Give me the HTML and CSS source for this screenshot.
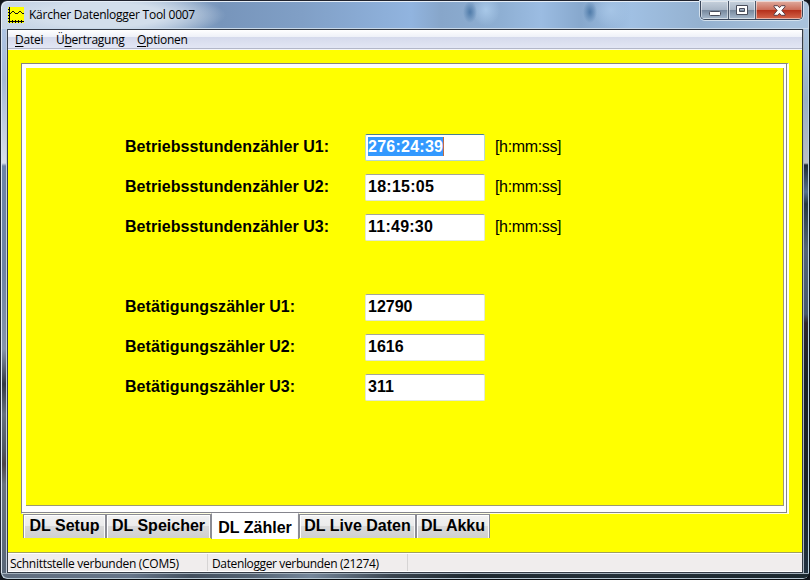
FILE: index.html
```html
<!DOCTYPE html>
<html lang="de">
<head>
<meta charset="utf-8">
<title>Kärcher Datenlogger Tool 0007</title>
<link rel="stylesheet" href="styles.css">
</head>
<body>
<div class="window">
  <header class="titlebar">
    <svg class="app-icon" width="16" height="16" viewBox="0 0 16 16" shape-rendering="crispEdges">
      <rect width="16" height="16" fill="#ff0"/>
      <path d="M1.5 0v16M0 14.5h16M0 2.5h2M0 5.5h2M0 8.5h2M0 11.5h2M4.5 13v3M7.5 13v3M10.5 13v3M13.5 13v3" fill="none" stroke="#000"/>
      <path d="M2 6h1v1H2zM3 5h1v1H3zM4 4h2v1H4zM6 5h1v1H6zM7 6h3v1H7zM10 5h1v1h-1zM11 4h2v1h-2zM13 5h1v1h-1zM14 6h2v1h-2z" fill="#111"/>
    </svg>
    <h1 class="title">Kärcher Datenlogger Tool 0007</h1>
    <div class="controls">
      <span class="control minimize"><svg width="12" height="5" viewBox="0 0 12 5"><rect x=".5" y=".5" width="11" height="4" rx="1" fill="#fff" stroke="#484d5b"/></svg></span>
      <span class="control maximize"><svg width="12" height="10" viewBox="0 0 12 10"><path d="M.5.5h11v9H.5zM3.5 3.5v3h5v-3z" fill="#fff" fill-rule="evenodd" stroke="#484d5b"/></svg></span>
      <span class="control close"><svg width="13" height="11" viewBox="0 0 13 11"><path d="M1 .7h3.7l1.8 2 1.8-2H12v1.1L8.8 5.5 12 9.2v1.1H8.3l-1.8-2-1.8 2H1V9.2l3.2-3.7L1 1.8z" fill="#fff" stroke="#5b3f48"/></svg></span>
    </div>
  </header>
  <div class="side side-left"></div>
  <main class="client">
    <nav class="menu">
      <span class="menu-file"><u>D</u>atei</span>
      <span class="menu-transfer">Ü<u>b</u>ertragung</span>
      <span class="menu-options"><u>O</u>ptionen</span>
    </nav>
    <div class="workspace">
      <section class="panel">
        <div class="page">
          <div class="group">
            <div class="row"><span class="label">Betriebsstundenzähler U1:</span><span class="field focused"><span class="selection">276:24:39</span></span><span class="unit">[h:mm:ss]</span></div>
            <div class="row"><span class="label">Betriebsstundenzähler U2:</span><span class="field time">18:15:05</span><span class="unit">[h:mm:ss]</span></div>
            <div class="row"><span class="label">Betriebsstundenzähler U3:</span><span class="field time">11:49:30</span><span class="unit">[h:mm:ss]</span></div>
          </div>
          <div class="group">
            <div class="row"><span class="label">Betätigungszähler U1:</span><span class="field">12790</span></div>
            <div class="row"><span class="label">Betätigungszähler U2:</span><span class="field">1616</span></div>
            <div class="row"><span class="label">Betätigungszähler U3:</span><span class="field">311</span></div>
          </div>
        </div>
      </section>
      <div class="tabs">
        <span class="tab tab-setup">DL Setup</span>
        <span class="tab tab-memory">DL Speicher</span>
        <span class="tab tab-counter active">DL Zähler</span>
        <span class="tab tab-live">DL Live Daten</span>
        <span class="tab tab-battery">DL Akku</span>
      </div>
    </div>
    <footer class="status">
      <span class="status-port">Schnittstelle verbunden (COM5)</span>
      <span class="status-device">Datenlogger verbunden (21274)</span>
    </footer>
  </main>
  <div class="side side-right"></div>
  <div class="bottom"></div>
</div>
</body>
</html>
```
FILE: styles.css
```css
* { box-sizing: border-box; }
body { margin: 0; background: #11151c; overflow: hidden; }
.window {
  width: 810px; height: 580px;
  display: grid;
  grid-template-columns: 7px 796px 7px;
  grid-template-rows: 29px 544px 7px;
  border-radius: 7px;
  overflow: hidden;
  font: 12px "Open Sans", "Noto Sans", sans-serif;
  color: #000;
}
.titlebar {
  grid-column: 1 / 4;
  display: flex;
  align-items: flex-start;
  padding: 1px 6px 0 7px;
  border-top: 1px solid #20232e;
  border-left: 1px solid #20232e;
  border-right: 1px solid #20232e;
  border-radius: 7px 7px 0 0;
  box-shadow: inset 1px 1px 0 #e6eef7, inset -1px -1px 0 #c8d8e8;
  background:
    radial-gradient(ellipse 7px 11px at 469px 11px, #5580ad 10%, #5580ad00),
    radial-gradient(ellipse 7px 11px at 589px 11px, #5580ad 10%, #5580ad00),
    radial-gradient(ellipse 14px 16px at 485px 9px, #a8c8e8, #a8c8e800),
    radial-gradient(ellipse 18px 18px at 610px 9px, #a6c5e6, #a6c5e600),
    radial-gradient(ellipse 125px 24px at 100px 14px, #d2deeb 50%, #c4d3e300),
    linear-gradient(90deg, #c6d4e5 0, #aabfd8 140px, #7795bb 220px, #809fc6 300px, #91b4df 410px, #87a6ca 440px, #8eafd3 500px, #9bbce2 540px, #87a8cd 580px, #a0c0e3 630px, #94b1d0 700px, #a9c2dc 790px);
}
.app-icon { margin: 5px 0 0; display: block; }
.title { margin: 4px 0 0 5px; font: inherit; line-height: 17px; white-space: nowrap; flex: 1; letter-spacing: -.25px; }
.controls {
  display: flex; height: 19px; margin: -1px 0 0;
  border: 1px solid #39465a; border-top: 0;
  border-radius: 0 0 5px 5px;
  box-shadow: 0 0 0 1px #d4e1ed;
  overflow: hidden;
}
.control { display: flex; align-items: center; justify-content: center; box-shadow: inset 0 0 0 1px #ffffff80; }
.minimize, .maximize { background: linear-gradient(#c6d1dc, #aab7c6 48%, #78899e 52%, #a7bacd); border-right: 1px solid #4b586a; }
.minimize { width: 28px; padding-top: 6px; }
.maximize { width: 27px; }
.close { width: 46px; background: linear-gradient(#e0aca0, #cc6e5a 48%, #b5301b 52%, #d5674c); }
.side-left {
  border: solid #252a34; border-width: 0 0 0 1px;
  box-shadow: inset 1px 0 #dce5ee, inset -1px 0 #c4cedb;
  background: linear-gradient(#aec4e2, #a6b9d7 51px, #d9dfe9 134px, #6d84a7 137px, #6e83a4 240px, #8795aa 320px, #343945 355px, #66717f 385px, #505864 420px, #4d454a 435px, #69727f 455px, #596778);
}
.side-right {
  border-right: 1px solid #10151b;
  box-shadow: inset -1px 0 #b7d0de, inset 1px 0 #a9b5bd;
  background: linear-gradient(#a9c3df, #98afc4 70px, #bbbec2 134px, #1e2b34 136px, #56718e 163px, #263941 175px, #536477 220px, #46586d 285px, #30262d 294px, #1a2228 350px, #192128 450px, #223240);
}
.bottom {
  grid-column: 1 / 4;
  border: 1px solid #0b0e12; border-top: 0;
  border-radius: 0 0 7px 7px;
  box-shadow: inset 1px -1px 0 #b6c6d1, inset 0 1px 0 #a3b0bb;
  background: linear-gradient(90deg, #606d7e, #667589 130px, #43505f 190px, #526171 250px, #75869a 310px, #3a4550 390px, #1e2930 470px, #243039 600px, #1b282f);
}
.client {
  border: 1px solid #343b46;
  background: #ff0;
  display: flex; flex-direction: column;
}
.menu {
  height: 20px; flex: none; display: flex; gap: 14px;
  padding-left: 7px; line-height: 20px; letter-spacing: -.25px;
  background: linear-gradient(#fff 0, #eef1f8 7px, #d5daec 7px, #e2e6f4 18px, #b3b7c9 18px, #b3b7c9 19px, #f4f5fa 19px);
}
.menu-file { width: 27px; }
.menu-transfer { width: 67px; }
.menu u { text-underline-offset: 2px; text-decoration-thickness: 1px; }
.workspace { flex: 1; padding: 13px 13px 0; }
.panel {
  width: 768px; height: 451px;
  border: 1px solid #858585;
  border-right: 2px solid #fffff0;
  border-bottom: 1px solid #ffffe0;
  background: #fff;
  padding: 4px 2px 6px 4px;
  box-shadow: inset -1px -1px #85858d;
}
.page {
  height: 438px; width: 758px;
  border-right: 1px solid #9c9a70;
  border-bottom: 1px solid #9c9a70;
  background: #ff0;
  padding: 66px 0 0 99px;
  font: 16px "Liberation Sans", Arial, sans-serif;
}
.group { display: grid; gap: 13px; margin-bottom: 53px; }
.row { display: flex; height: 27px; line-height: 25px; white-space: nowrap; }
.label { width: 240px; font-weight: bold; letter-spacing: .06px; }
.field {
  width: 120px; padding-left: 2px;
  border: 1px solid #e3e9d0; border-top-color: #a2a49c;
  border-radius: 2px; background: #fff; font-weight: bold; line-height: 23px;
}
.time { letter-spacing: .25px; }
.focused { border-color: #b8d8cf; border-top-color: #477e94; }
.selection { display: inline-block; height: 19px; line-height: 19px; margin-top: 2px; background: #3399ff; color: #fff; border-right: 1px solid #bd6c45; vertical-align: top; letter-spacing: .25px; }
.unit { margin-left: 10px; letter-spacing: -.35px; }
.tabs { display: flex; align-items: flex-start; margin-left: 2px; font: bold 16px/21px "Liberation Sans", Arial, sans-serif; white-space: nowrap; }
.tab {
  height: 24px; text-align: center;
  border: 1px solid #8b8c94; border-bottom: 0;
  box-shadow: inset 1px 1px #fff, inset -1px 0 #fafafa;
  background: linear-gradient(#f2f2f2, #ebebeb 48%, #dadada 50%, #cfcfcf);
}
.tab-setup { width: 83px; }
.tab-memory { width: 105px; }
.tab-counter { width: 88px; }
.tab-live { width: 117px; }
.tab-battery { width: 74px; }
.tab.active { height: 26px; margin-top: -1px; line-height: 27px; background: #fff; border-top-color: #fff; }
.status {
  height: 19px; flex: none; display: flex; line-height: 19px; white-space: nowrap;
  background: #f0eded; border-top: 1px solid #fff; border-bottom: 1px solid #fff;
  box-shadow: 0 -1px #a0a060; letter-spacing: -.37px;
}
.status span { border-right: 1px solid #d6d4d4; padding-left: 2px; }
.status-port { width: 200px; }
.status-device { width: 200px; }
.status .status-port { letter-spacing: -.28px; }
.status .status-device { padding-left: 4px; }
```
